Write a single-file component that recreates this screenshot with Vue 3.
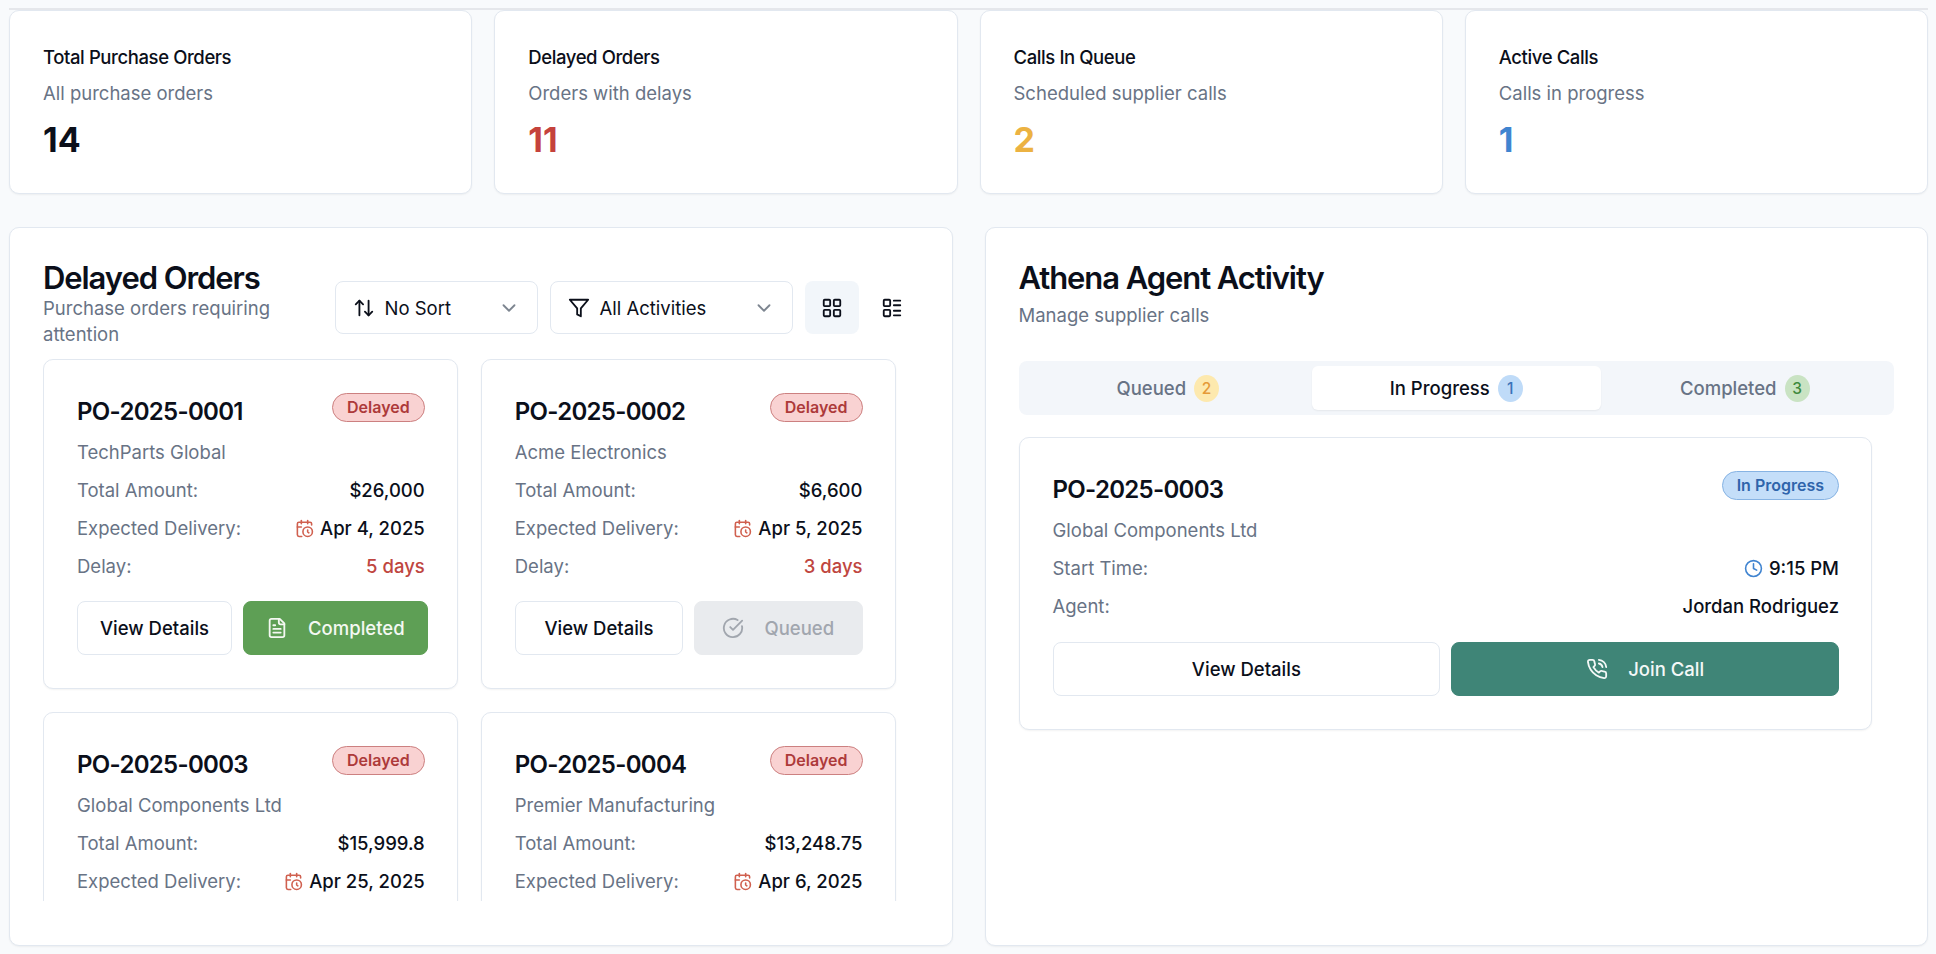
<template>
  <div class="page">
    <div class="topline"></div>
    <section class="stats">
      <div class="stat" v-for="s in stats" :key="s.title">
        <div class="stat-title">{{ s.title }}</div>
        <div class="stat-sub">{{ s.sub }}</div>
        <div class="stat-num" :class="s.tone">{{ s.value }}</div>
      </div>
    </section>

    <section class="panels">
      <div class="panel">
        <div class="panel-head">
          <div class="head-text">
            <h2>Delayed Orders</h2>
            <p>Purchase orders requiring attention</p>
          </div>
          <div class="controls">
            <div class="select sort">
              <svg class="ico" viewBox="0 0 24 24"><path d="m21 16-4 4-4-4" /><path d="M17 20V4" /><path d="m3 8 4-4 4 4" /><path d="M7 4v16" /></svg>
              <span>No Sort</span>
              <svg class="chev" viewBox="0 0 24 24"><path d="m6 9 6 6 6-6" /></svg>
            </div>
            <div class="select filter">
              <svg class="ico" viewBox="0 0 24 24"><polygon points="22 3 2 3 10 12.46 10 19 14 21 14 12.46 22 3" /></svg>
              <span>All Activities</span>
              <svg class="chev" viewBox="0 0 24 24"><path d="m6 9 6 6 6-6" /></svg>
            </div>
            <div class="toggles">
              <div class="toggle active">
                <svg class="ico" viewBox="0 0 24 24"><rect width="7" height="7" x="3" y="3" rx="1" /><rect width="7" height="7" x="14" y="3" rx="1" /><rect width="7" height="7" x="14" y="14" rx="1" /><rect width="7" height="7" x="3" y="14" rx="1" /></svg>
              </div>
              <div class="toggle">
                <svg class="ico" viewBox="0 0 24 24"><rect width="7" height="7" x="3" y="3" rx="1" /><rect width="7" height="7" x="3" y="14" rx="1" /><path d="M14 4h7" /><path d="M14 9h7" /><path d="M14 15h7" /><path d="M14 20h7" /></svg>
              </div>
            </div>
          </div>
        </div>

        <div class="scroller">
          <div class="order-grid">
            <div class="card" v-for="o in orders" :key="o.id">
              <div class="card-top">
                <h3>{{ o.id }}</h3>
                <span class="badge red">Delayed</span>
              </div>
              <div class="company">{{ o.company }}</div>
              <div class="row">
                <span>Total Amount:</span>
                <b>{{ o.amount }}</b>
              </div>
              <div class="row">
                <span>Expected Delivery:</span>
                <b class="with-icon">
                  <svg class="small-ico cal" viewBox="0 0 24 24"><path d="M21 7.5V6a2 2 0 0 0-2-2H5a2 2 0 0 0-2 2v14a2 2 0 0 0 2 2h3.5" /><path d="M16 2v4" /><path d="M8 2v4" /><path d="M3 10h5" /><path d="M17.5 17.5 16 16.3V14" /><circle cx="16" cy="16" r="6" /></svg>
                  {{ o.date }}
                </b>
              </div>
              <template v-if="o.delay">
                <div class="row">
                  <span>Delay:</span>
                  <b class="late">{{ o.delay }}</b>
                </div>
                <div class="actions">
                  <button class="btn">View Details</button>
                  <button v-if="o.status === 'Completed'" class="btn green">
                    <svg class="btn-ico" viewBox="0 0 24 24"><path d="M15 2H6a2 2 0 0 0-2 2v16a2 2 0 0 0 2 2h12a2 2 0 0 0 2-2V7Z" /><path d="M14 2v4a2 2 0 0 0 2 2h4" /><path d="M10 9H8" /><path d="M16 13H8" /><path d="M16 17H8" /></svg>
                    Completed
                  </button>
                  <button v-else class="btn muted">
                    <svg class="btn-ico" viewBox="0 0 24 24"><path d="M21.801 10A10 10 0 1 1 17 3.335" /><path d="m9 11 3 3L22 4" /></svg>
                    Queued
                  </button>
                </div>
              </template>
            </div>
          </div>
        </div>
      </div>

      <div class="panel">
        <div class="head-text">
          <h2>Athena Agent Activity</h2>
          <p class="sub-one">Manage supplier calls</p>
        </div>

        <div class="tabs">
          <div class="tab" v-for="t in tabs" :key="t.label" :class="{ on: t.on }">
            {{ t.label }}
            <span class="count" :class="t.tone">{{ t.count }}</span>
          </div>
        </div>

        <div class="calls">
          <div class="card">
            <div class="card-top">
              <h3>PO-2025-0003</h3>
              <span class="badge blue">In Progress</span>
            </div>
            <div class="company">Global Components Ltd</div>
            <div class="row">
              <span>Start Time:</span>
              <b class="with-icon">
                <svg class="small-ico clock" viewBox="0 0 24 24"><circle cx="12" cy="12" r="10" /><polyline points="12 6 12 12 16 14" /></svg>
                9:15 PM
              </b>
            </div>
            <div class="row">
              <span>Agent:</span>
              <b>Jordan Rodriguez</b>
            </div>
            <div class="actions">
              <button class="btn">View Details</button>
              <button class="btn teal">
                <svg class="btn-ico" viewBox="0 0 24 24"><path d="M22 16.92v3a2 2 0 0 1-2.18 2 19.79 19.79 0 0 1-8.63-3.07 19.5 19.5 0 0 1-6-6 19.79 19.79 0 0 1-3.07-8.67A2 2 0 0 1 4.11 2h3a2 2 0 0 1 2 1.72 12.84 12.84 0 0 0 .7 2.81 2 2 0 0 1-.45 2.11L8.09 9.91a16 16 0 0 0 6 6l1.27-1.27a2 2 0 0 1 2.11-.45 12.84 12.84 0 0 0 2.81.7A2 2 0 0 1 22 16.92z" /><path d="M14.05 2a9 9 0 0 1 8 7.94" /><path d="M14.05 6A5 5 0 0 1 18 10" /></svg>
                Join Call
              </button>
            </div>
          </div>
        </div>
      </div>
    </section>
  </div>
</template>

<script setup>
const stats = [
  { title: "Total Purchase Orders", sub: "All purchase orders", value: 14, tone: "" },
  { title: "Delayed Orders", sub: "Orders with delays", value: 11, tone: "t-red" },
  { title: "Calls In Queue", sub: "Scheduled supplier calls", value: 2, tone: "t-amber" },
  { title: "Active Calls", sub: "Calls in progress", value: 1, tone: "t-blue" },
]

const orders = [
  { id: "PO-2025-0001", company: "TechParts Global", amount: "$26,000", date: "Apr 4, 2025", delay: "5 days", status: "Completed" },
  { id: "PO-2025-0002", company: "Acme Electronics", amount: "$6,600", date: "Apr 5, 2025", delay: "3 days", status: "Queued" },
  { id: "PO-2025-0003", company: "Global Components Ltd", amount: "$15,999.8", date: "Apr 25, 2025" },
  { id: "PO-2025-0004", company: "Premier Manufacturing", amount: "$13,248.75", date: "Apr 6, 2025" },
]

const tabs = [
  { label: "Queued", count: 2, tone: "c-amber" },
  { label: "In Progress", count: 1, tone: "c-blue", on: true },
  { label: "Completed", count: 3, tone: "c-green" },
]
</script>

<style>
html,
body {
  margin: 0;
  background: #f8fafc;
}
</style>

<style scoped>
* {
  box-sizing: border-box;
}
.page {
  height: 954px;
  overflow: hidden;
  padding: 8px 8px 0 9px;
  font-family: Inter, "Liberation Sans", sans-serif;
  font-size: 18.5px;
  color: #0b0f1a;
}
.topline {
  height: 2px;
  background: #e5e7eb;
}
.stats {
  display: grid;
  grid-template-columns: repeat(4, 1fr);
  gap: 22px;
}
.stat {
  height: 184px;
  padding: 34px 33px;
  background: #fff;
  border: 1px solid #e2e8f0;
  border-radius: 10px;
  box-shadow: 0 1px 2px rgba(0, 0, 0, 0.05);
}
.stat-title {
  font-weight: 500;
  line-height: 24px;
  letter-spacing: -0.4px;
}
.stat-sub {
  margin-top: 11.5px;
  line-height: 24px;
  color: #687385;
}
.stat-num {
  margin-top: 17px;
  font-size: 34px;
  font-weight: 700;
  line-height: 36px;
}
.t-red {
  color: #c5423c;
}
.t-amber {
  color: #ecb242;
}
.t-blue {
  color: #4084d0;
}
.panels {
  display: grid;
  grid-template-columns: minmax(0, 1fr) minmax(0, 1fr);
  gap: 32px;
  margin-top: 33px;
}
.panel {
  height: 719px;
  padding: 32px 33px 33px;
  background: #fff;
  border: 1px solid #e2e8f0;
  border-radius: 10px;
  box-shadow: 0 1px 2px rgba(0, 0, 0, 0.05);
}
.panel-head {
  display: flex;
  align-items: flex-end;
  gap: 22px;
}
.head-text {
  flex: 1;
  min-width: 0;
}
h2 {
  margin: 0;
  font-size: 31px;
  font-weight: 600;
  line-height: 36px;
  letter-spacing: -1.07px;
}
.head-text p {
  margin: -1px 0 0;
  line-height: 26px;
  color: #687385;
}
.head-text .sub-one {
  margin-top: 6px;
}
.controls {
  display: flex;
  align-items: center;
  gap: 12px;
  margin-bottom: 13px;
  flex: none;
}
.toggles {
  display: flex;
  gap: 6px;
}
.select {
  display: flex;
  align-items: center;
  height: 53px;
  background: #fff;
  border: 1px solid #e2e8f0;
  border-radius: 8px;
  padding: 0 17px;
}
.select span {
  flex: 1;
  margin-left: 10px;
  white-space: nowrap;
}
.sort {
  width: 203px;
}
.filter {
  width: 243px;
}
.ico {
  width: 22px;
  height: 22px;
  flex: none;
  fill: none;
  stroke: #0b0f1a;
  stroke-width: 2;
  stroke-linecap: round;
  stroke-linejoin: round;
}
.chev {
  width: 22px;
  height: 22px;
  flex: none;
  fill: none;
  stroke: #7d8590;
  stroke-width: 2;
  stroke-linecap: round;
  stroke-linejoin: round;
}
.toggle {
  width: 54px;
  height: 53px;
  border-radius: 8px;
  display: flex;
  align-items: center;
  justify-content: center;
}
.toggle.active {
  background: #f2f6fa;
}
.scroller {
  height: 542px;
  margin-top: 12px;
  overflow: hidden;
  padding-right: 23px;
}
.order-grid {
  display: grid;
  grid-template-columns: minmax(0, 1fr) minmax(0, 1fr);
  gap: 23px;
}
.card {
  padding: 33px 32px 33px 33px;
  background: #fff;
  border: 1px solid #e2e8f0;
  border-radius: 10px;
  box-shadow: 0 1px 2px rgba(0, 0, 0, 0.05);
}
.card-top {
  display: flex;
  justify-content: space-between;
  align-items: flex-start;
}
h3 {
  margin: 0;
  font-size: 24px;
  font-weight: 600;
  line-height: 37px;
  letter-spacing: -0.7px;
}
.badge {
  height: 29px;
  padding: 0 14px;
  border-radius: 15px;
  border: 1px solid;
  font-size: 16px;
  font-weight: 600;
  line-height: 27px;
}
.badge.red {
  background: #f9d2d2;
  border-color: #cc8080;
  color: #ad3a3a;
}
.badge.blue {
  background: #c4def9;
  border-color: #86b3e3;
  color: #2f64ab;
}
.company {
  margin-top: 9px;
  line-height: 26px;
  color: #687385;
}
.row {
  display: flex;
  justify-content: space-between;
  align-items: center;
  margin-top: 12px;
  line-height: 26px;
  color: #687385;
}
.row b {
  font-weight: 500;
  color: #0b0f1a;
}
.row b.late {
  color: #bf4640;
}
.with-icon {
  display: flex;
  align-items: center;
  gap: 6px;
}
.small-ico {
  width: 19px;
  height: 19px;
  fill: none;
  stroke-width: 2;
  stroke-linecap: round;
  stroke-linejoin: round;
}
.cal {
  stroke: #d0604f;
}
.clock {
  stroke: #4084d0;
}
.actions {
  display: flex;
  gap: 11px;
  margin-top: 22px;
}
.btn {
  flex: 1;
  height: 54px;
  padding: 0 22px;
  display: flex;
  align-items: center;
  justify-content: center;
  gap: 20px;
  white-space: nowrap;
  background: #fff;
  color: #0b0f1a;
  border: 1px solid #e2e8f0;
  border-radius: 8px;
  font-family: inherit;
  font-size: 18.5px;
  font-weight: 500;
}
.btn-ico {
  width: 22px;
  height: 22px;
  flex: none;
  fill: none;
  stroke: currentColor;
  stroke-width: 2;
  stroke-linecap: round;
  stroke-linejoin: round;
}
.btn.green {
  background: #5e9f55;
  border-color: #5e9f55;
  color: #f4f8f2;
}
.btn.muted {
  background: #e9ebee;
  border-color: #e9ebee;
  color: #a1a6ae;
}
.btn.teal {
  background: #3f8577;
  border-color: #3f8577;
  color: #f4f8f7;
}
.tabs {
  display: grid;
  grid-template-columns: repeat(3, 1fr);
  height: 54px;
  margin-top: 33px;
  padding: 5px;
  background: #f3f6fa;
  border-radius: 8px;
}
.tab {
  display: flex;
  align-items: center;
  justify-content: center;
  gap: 8px;
  border-radius: 6px;
  font-weight: 500;
  color: #687385;
}
.tab.on {
  background: #fff;
  color: #0b0f1a;
  box-shadow: 0 1px 2px rgba(0, 0, 0, 0.06);
}
.count {
  width: 25px;
  height: 27px;
  border-radius: 50%;
  display: flex;
  align-items: center;
  justify-content: center;
  font-size: 15.5px;
  font-weight: 500;
}
.c-amber {
  background: #fde9ae;
  color: #e59a38;
}
.c-blue {
  background: #bfdbf8;
  color: #3a72b8;
}
.c-green {
  background: #c9e3c3;
  color: #3f8a3e;
}
.calls {
  margin-top: 22px;
  padding-right: 22px;
}
.calls .actions {
  margin-top: 23px;
}
</style>
